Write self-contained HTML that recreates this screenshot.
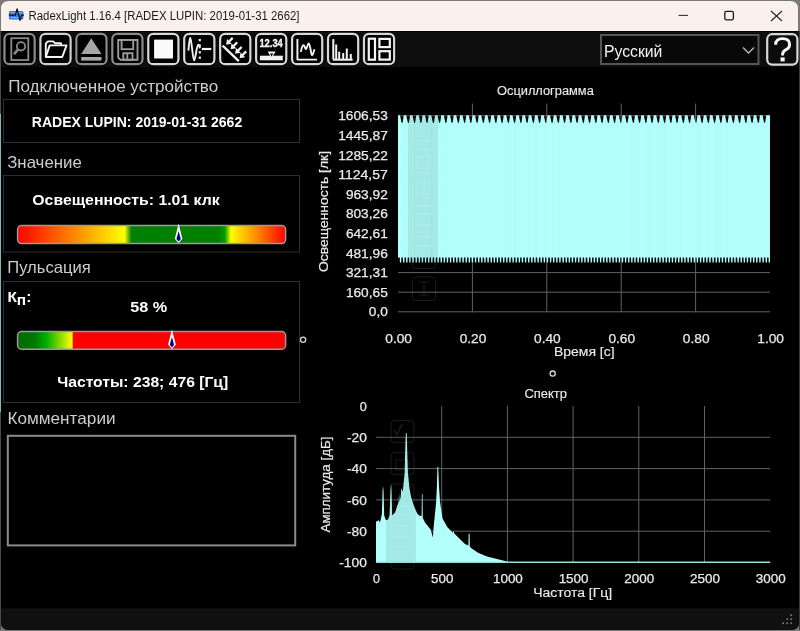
<!DOCTYPE html>
<html><head><meta charset="utf-8">
<style>
html,body{margin:0;padding:0;background:#7a7a7a;width:800px;height:631px;overflow:hidden}
svg{display:block;position:absolute;left:0;top:0;will-change:transform}
text{font-family:"Liberation Sans",sans-serif}
</style></head><body>
<svg width="800" height="631" viewBox="0 0 800 631">
<defs>
<linearGradient id="g1" x1="17" x2="286" y1="0" y2="0" gradientUnits="userSpaceOnUse">
<stop offset="0" stop-color="#ff0000"/>
<stop offset="0.40" stop-color="#ffff00"/>
<stop offset="0.425" stop-color="#008000"/>
<stop offset="0.75" stop-color="#008000"/>
<stop offset="0.773" stop-color="#00a000"/>
<stop offset="0.795" stop-color="#ffff00"/>
<stop offset="1" stop-color="#ff0000"/>
</linearGradient>
<linearGradient id="g2" x1="17" x2="286" y1="0" y2="0" gradientUnits="userSpaceOnUse">
<stop offset="0" stop-color="#006a00"/>
<stop offset="0.067" stop-color="#007a00"/>
<stop offset="0.11" stop-color="#00b000"/>
<stop offset="0.205" stop-color="#ffff00"/>
<stop offset="0.209" stop-color="#ff0000"/>
<stop offset="1" stop-color="#ff0000"/>
</linearGradient>
</defs>
<!-- window frame -->
<rect x="0" y="0" width="800" height="631" fill="#7a7a7a"/>
<path d="M1 31 V9 Q1 1 9 1 H790 Q798 1 798 9 V31 Z" fill="#faf1ed"/>
<path d="M1 31 H799 V622 Q799 630 791 630 H9 Q1 630 1 622 Z" fill="#000"/>
<rect x="1" y="31" width="798" height="36" fill="#0e0e0e"/>
<path d="M1 608.3 H799 V622 Q799 630 791 630 H9 Q1 630 1 622 Z" fill="#101010"/>
<!-- title -->
<text x="28.5" y="19.5" font-size="12" fill="#1a1a1a" textLength="271" lengthAdjust="spacingAndGlyphs">RadexLight 1.16.4 [RADEX LUPIN: 2019-01-31 2662]</text>
<!-- window buttons -->
<line x1="678.5" y1="15.4" x2="688" y2="15.4" stroke="#333" stroke-width="1.1"/>
<rect x="724.8" y="11.4" width="8.6" height="8.4" rx="1.6" fill="none" stroke="#1a1a1a" stroke-width="1.3"/>
<path d="M771 11 L782 21 M782 11 L771 21" stroke="#222" stroke-width="1.1"/>
<!-- toolbar -->
<rect x="1" y="31" width="798" height="1" fill="#000"/>
<g fill="#000" stroke-width="4.5">
<rect x="4.45" y="33.9" width="30.2" height="30.3" rx="6" stroke="#000"/>
<rect x="40.40" y="33.9" width="30.2" height="30.3" rx="6" stroke="#000"/>
<rect x="76.35" y="33.9" width="30.2" height="30.3" rx="6" stroke="#000"/>
<rect x="112.30" y="33.9" width="30.2" height="30.3" rx="6" stroke="#000"/>
<rect x="148.25" y="33.9" width="30.2" height="30.3" rx="6" stroke="#000"/>
<rect x="184.20" y="33.9" width="30.2" height="30.3" rx="6" stroke="#000"/>
<rect x="220.15" y="33.9" width="30.2" height="30.3" rx="6" stroke="#000"/>
<rect x="256.10" y="33.9" width="30.2" height="30.3" rx="6" stroke="#000"/>
<rect x="292.05" y="33.9" width="30.2" height="30.3" rx="6" stroke="#000"/>
<rect x="328.00" y="33.9" width="30.2" height="30.3" rx="6" stroke="#000"/>
<rect x="363.95" y="33.9" width="30.2" height="30.3" rx="6" stroke="#000"/>
</g>
<g fill="#000" stroke-width="2.2">
<rect x="4.45" y="33.9" width="30.2" height="30.3" rx="5" stroke="#8c8c8c"/>
<rect x="40.40" y="33.9" width="30.2" height="30.3" rx="5" stroke="#cfcfcf"/>
<rect x="76.35" y="33.9" width="30.2" height="30.3" rx="5" stroke="#8c8c8c"/>
<rect x="112.30" y="33.9" width="30.2" height="30.3" rx="5" stroke="#8c8c8c"/>
<rect x="148.25" y="33.9" width="30.2" height="30.3" rx="5" stroke="#d8d8d8"/>
<rect x="184.20" y="33.9" width="30.2" height="30.3" rx="5" stroke="#d8d8d8"/>
<rect x="220.15" y="33.9" width="30.2" height="30.3" rx="5" stroke="#d8d8d8"/>
<rect x="256.10" y="33.9" width="30.2" height="30.3" rx="5" stroke="#d8d8d8"/>
<rect x="292.05" y="33.9" width="30.2" height="30.3" rx="5" stroke="#d8d8d8"/>
<rect x="328.00" y="33.9" width="30.2" height="30.3" rx="5" stroke="#d8d8d8"/>
<rect x="363.95" y="33.9" width="30.2" height="30.3" rx="5" stroke="#d8d8d8"/>
</g>
<!-- icon1 search doc -->
<g fill="none" stroke="#8a8a8a" stroke-width="1.8">
<rect x="11.3" y="38.2" width="17" height="21.8"/>
<circle cx="21" cy="46.3" r="4.2"/>
<line x1="18.2" y1="49.3" x2="14" y2="54.2" stroke-width="2.6"/>
</g>
<!-- icon2 folder -->
<g fill="none" stroke="#f4f4f4" stroke-width="1.9" stroke-linejoin="round">
<path d="M45.8 57 V43.6 L48 41.4 H53.2 L55.1 43.3 H61 V45.4"/>
<path d="M49.7 45.4 H66.6 L62.2 57 H45.8 Z"/>
</g>
<!-- icon3 eject -->
<path d="M91.2 38.2 L101.5 54 H81.2 Z" fill="#a6a6a6"/>
<rect x="81.2" y="57" width="20.3" height="3.6" fill="#a6a6a6"/>
<!-- icon4 floppy -->
<g fill="none" stroke="#9a9a9a" stroke-width="1.9">
<path d="M118.2 40 H137.5 V59.8 H120.5 L118.2 57.5 Z"/>
<rect x="121.6" y="40" width="11.6" height="9.2"/>
<rect x="123.3" y="53.2" width="9.2" height="6.6"/>
<line x1="127.3" y1="53.2" x2="127.3" y2="59.8"/>
</g>
<!-- icon5 stop -->
<rect x="154.1" y="39.6" width="18.9" height="18.9" fill="#fafafa"/>
<!-- icon6 wave+dots -->
<g fill="none" stroke="#f2f2f2" stroke-width="1.9" stroke-linejoin="round">
<path d="M188.4 50.6 C189.2 44, 189.4 37.6, 190.3 37.6 C191.4 37.6, 192.8 60.4, 194.1 60.4 C195.4 60.4, 196.8 44.6, 198.1 44.6 C198.9 44.6, 199.4 47, 200.2 48.2"/>
<line x1="201.8" y1="49" x2="211.3" y2="49" stroke-width="2.2"/>
</g>
<g fill="#f2f2f2">
<rect x="198.7" y="39" width="2.2" height="2.2"/>
<rect x="198.7" y="44.4" width="2.2" height="2.2"/>
<rect x="198.7" y="51.2" width="2.2" height="2.2"/>
<rect x="198.7" y="56.6" width="2.2" height="2.2"/>
</g>
<!-- icon7 rays -->
<line x1="222.6" y1="45.6" x2="238.8" y2="61.2" stroke="#f2f2f2" stroke-width="2.3"/>
<line x1="232.7" y1="37.9" x2="228.6" y2="42.0" stroke="#f2f2f2" stroke-width="2.3"/><path d="M226.1 44.7 L231.7 43.8 L227.0 39.1 Z" fill="#f2f2f2"/><line x1="237.2" y1="42.4" x2="233.1" y2="46.5" stroke="#f2f2f2" stroke-width="2.3"/><path d="M230.6 49.2 L236.2 48.3 L231.5 43.6 Z" fill="#f2f2f2"/><line x1="241.7" y1="46.9" x2="237.6" y2="51.0" stroke="#f2f2f2" stroke-width="2.3"/><path d="M235.1 53.7 L240.7 52.8 L236.0 48.1 Z" fill="#f2f2f2"/><line x1="246.2" y1="51.4" x2="242.1" y2="55.5" stroke="#f2f2f2" stroke-width="2.3"/><path d="M239.6 58.2 L245.2 57.3 L240.5 52.6 Z" fill="#f2f2f2"/>
<!-- icon8 12.34 -->
<text x="259.4" y="46.6" font-size="10.2" font-weight="bold" fill="#f2f2f2" stroke="#f2f2f2" stroke-width="0.35" textLength="23.4" lengthAdjust="spacingAndGlyphs">12.34</text>
<rect x="259.9" y="55.7" width="22.9" height="4.6" fill="#f2f2f2"/>
<path d="M267.6 51.6 H275.6 L271.6 58.2 Z" fill="#f2f2f2"/><path d="M270 53.6 H273.2 L271.6 56.4 Z" fill="#000"/>
<!-- icon9 wave plot -->
<g fill="none" stroke="#f2f2f2" stroke-width="1.9" stroke-linejoin="round">
<path d="M297.4 39.1 V59.6 H317"/>
<path d="M300.8 51.9 C301.8 47, 302.6 45.2, 303.6 45.3 C304.8 45.5, 305 49.2, 306 49.2 C307 49.2, 307.6 43.3, 308.8 43.5 C310.2 43.7, 311 55.5, 312.1 55.4 C313.2 55.3, 313.6 51, 314.6 49.3"/>
</g>
<!-- icon10 histogram -->
<g fill="#f2f2f2">
<rect x="332.8" y="58.7" width="19.8" height="2"/>
<rect x="332.3" y="39.1" width="2" height="20"/>
<rect x="335.2" y="44.5" width="2" height="15"/>
<rect x="338.2" y="51.7" width="2" height="8"/>
<rect x="342.2" y="53" width="2" height="7"/>
<rect x="345.8" y="48.5" width="2" height="11"/>
<rect x="349.8" y="54" width="2" height="6"/>
</g>
<!-- icon11 layout -->
<g fill="none" stroke="#f4f4f4" stroke-width="2.2">
<rect x="368.8" y="38.7" width="6.2" height="21"/>
<rect x="379.4" y="38.9" width="10.4" height="8.2"/>
<rect x="379.4" y="51.2" width="10.4" height="8.4"/>
</g>
<!-- combobox -->
<rect x="601" y="35" width="157.5" height="29" fill="#080808" stroke="#555" stroke-width="2"/>
<text x="604" y="56.9" font-size="16" fill="#f4f4f4" textLength="58.4" lengthAdjust="spacingAndGlyphs">Русский</text>
<path d="M743 47.5 L748.5 53 L754 47.5" fill="none" stroke="#bbb" stroke-width="1.3"/>
<rect x="767.2" y="34.2" width="30.2" height="30.4" rx="5" fill="#0c0c0c" stroke="#d8d8d8" stroke-width="2.2"/>
<path d="M775.6 44.8 Q775.6 38.6 782.4 38.6 Q789.6 38.6 789.6 44.4 Q789.6 47.6 786.2 49.6 Q782.6 51.8 782.6 54.2 V55.4" fill="none" stroke="#fafafa" stroke-width="2.9"/><rect x="780.5" y="57.4" width="4.2" height="4" fill="#fafafa"/>
<!-- left panels -->
<g fill="none" stroke="#2e2e2e" stroke-width="1">
<rect x="3.5" y="99.5" width="296" height="43"/>
<rect x="3.5" y="175.5" width="296" height="76.5"/>
<rect x="3.5" y="281.5" width="296" height="121"/>
</g>
<g font-size="16.5" fill="#cccccc">
<text x="8.2" y="92" textLength="210" lengthAdjust="spacingAndGlyphs">Подключенное устройство</text>
<text x="7.2" y="168" textLength="74.6" lengthAdjust="spacingAndGlyphs">Значение</text>
<text x="7.2" y="273.4" textLength="83.6" lengthAdjust="spacingAndGlyphs">Пульсация</text>
<text x="7.4" y="423.5" textLength="108.2" lengthAdjust="spacingAndGlyphs">Комментарии</text>
</g>
<g font-weight="bold" fill="#ffffff">
<text x="31.8" y="126.6" font-size="13.8" textLength="210.4" lengthAdjust="spacingAndGlyphs">RADEX LUPIN: 2019-01-31 2662</text>
<text x="32.3" y="205" font-size="14.3" textLength="187.4" lengthAdjust="spacingAndGlyphs">Освещенность: 1.01 клк</text>
<text x="130.2" y="311.6" font-size="14.3" textLength="37" lengthAdjust="spacingAndGlyphs">58 %</text>
<text x="57.2" y="387" font-size="14.3" textLength="171" lengthAdjust="spacingAndGlyphs">Частоты: 238; 476 [Гц]</text>
<text x="7.4" y="301.6" font-size="14.8" textLength="24" lengthAdjust="spacingAndGlyphs">К<tspan dy="3">п</tspan><tspan dy="-3">:</tspan></text>
</g>
<!-- gauge 1 -->
<rect x="17.6" y="225.6" width="268" height="18" rx="4" fill="url(#g1)" stroke="#9a9a9a" stroke-width="1.5"/>
<path d="M178.6 223.6 L182.4 238.7 L178.6 243.2 L174.8 238.7 Z" fill="#fff"/><path d="M178.6 231 L180.8 238.9 L178.6 241.6 L176.4 238.9 Z" fill="#00008a"/>
<!-- gauge 2 -->
<rect x="17.6" y="331.6" width="268" height="17.6" rx="4" fill="url(#g2)" stroke="#9a9a9a" stroke-width="1.5"/>
<path d="M171.9 329.4 L175.8 344.6 L171.9 349 L168.1 344.6 Z" fill="#fff"/><path d="M171.9 337 L174.1 344.8 L171.9 347.4 L169.7 344.8 Z" fill="#00008a"/>
<circle cx="303.1" cy="339.8" r="2.6" fill="none" stroke="#d8d8d8" stroke-width="1.3"/>
<!-- comment box -->
<rect x="7.8" y="435.8" width="287.4" height="109.6" fill="none" stroke="#8a8a8a" stroke-width="2"/>
<!-- misc -->
<rect x="0" y="31" width="1" height="599" fill="#4a4a4a"/>
<rect x="0" y="114" width="1" height="298" fill="#86b4b4"/>
<rect x="799" y="31" width="1" height="599" fill="#3a3a3a"/>
<rect x="8.9" y="11" width="14.5" height="8.6" rx="1.5" fill="#2a7be2"/>
<line x1="10.5" y1="12.8" x2="22" y2="12.8" stroke="#bcd6f5" stroke-width="0.8"/>
<line x1="10.5" y1="17.6" x2="22" y2="17.6" stroke="#bcd6f5" stroke-width="0.8"/>
<path d="M8.9 15.2 L15.4 15 L17.1 8.8 L20 20.3 L21.7 15.4 L23.8 15" fill="none" stroke="#111" stroke-width="1.3" stroke-linejoin="round"/>
<g fill="#707070"><rect x="790.3" y="614.3" width="1.8" height="1.8"/><rect x="786.3" y="618.3" width="1.8" height="1.8"/><rect x="790.3" y="618.3" width="1.8" height="1.8"/><rect x="782.3" y="622.3" width="1.8" height="1.8"/><rect x="786.3" y="622.3" width="1.8" height="1.8"/><rect x="790.3" y="622.3" width="1.8" height="1.8"/></g>
<!-- charts -->
<g stroke="#626262" stroke-width="1"><line x1="472.4" y1="103.6" x2="472.4" y2="312.3"/><line x1="546.8" y1="103.6" x2="546.8" y2="312.3"/><line x1="621.2" y1="103.6" x2="621.2" y2="312.3"/><line x1="695.6" y1="103.6" x2="695.6" y2="312.3"/><line x1="398.0" y1="311.8" x2="770.0" y2="311.8"/><line x1="398.0" y1="292.2" x2="770.0" y2="292.2"/><line x1="398.0" y1="272.6" x2="770.0" y2="272.6"/><line x1="398.0" y1="253.0" x2="770.0" y2="253.0"/><line x1="398.0" y1="233.4" x2="770.0" y2="233.4"/><line x1="398.0" y1="213.8" x2="770.0" y2="213.8"/><line x1="398.0" y1="194.2" x2="770.0" y2="194.2"/><line x1="398.0" y1="174.6" x2="770.0" y2="174.6"/><line x1="398.0" y1="155.0" x2="770.0" y2="155.0"/><line x1="398.0" y1="135.4" x2="770.0" y2="135.4"/><line x1="398.0" y1="115.8" x2="770.0" y2="115.8"/></g>
<path d="M398.0 122.8 L398.0 115.2 L400.0 115.2 L401.6 122.8 L402.6 122.8 L403.8 115.2 L404.2 115.2 L406.2 115.2 L407.9 122.8 L408.9 122.8 L410.1 115.2 L410.5 115.2 L412.5 115.2 L414.1 122.8 L415.1 122.8 L416.3 115.2 L416.8 115.2 L418.8 115.2 L420.4 122.8 L421.4 122.8 L422.6 115.2 L423.0 115.2 L425.0 115.2 L426.6 122.8 L427.6 122.8 L428.8 115.2 L429.2 115.2 L431.2 115.2 L432.9 122.8 L433.9 122.8 L435.1 115.2 L435.5 115.2 L437.5 115.2 L439.1 122.8 L440.1 122.8 L441.3 115.2 L441.8 115.2 L443.8 115.2 L445.4 122.8 L446.4 122.8 L447.6 115.2 L448.0 115.2 L450.0 115.2 L451.6 122.8 L452.6 122.8 L453.8 115.2 L454.2 115.2 L456.2 115.2 L457.9 122.8 L458.9 122.8 L460.1 115.2 L460.5 115.2 L462.5 115.2 L464.1 122.8 L465.1 122.8 L466.3 115.2 L466.8 115.2 L468.8 115.2 L470.4 122.8 L471.4 122.8 L472.6 115.2 L473.0 115.2 L475.0 115.2 L476.6 122.8 L477.6 122.8 L478.8 115.2 L479.2 115.2 L481.2 115.2 L482.9 122.8 L483.9 122.8 L485.1 115.2 L485.5 115.2 L487.5 115.2 L489.1 122.8 L490.1 122.8 L491.3 115.2 L491.8 115.2 L493.8 115.2 L495.4 122.8 L496.4 122.8 L497.6 115.2 L498.0 115.2 L500.0 115.2 L501.6 122.8 L502.6 122.8 L503.8 115.2 L504.2 115.2 L506.2 115.2 L507.9 122.8 L508.9 122.8 L510.1 115.2 L510.5 115.2 L512.5 115.2 L514.1 122.8 L515.1 122.8 L516.3 115.2 L516.8 115.2 L518.8 115.2 L520.4 122.8 L521.4 122.8 L522.5 115.2 L523.0 115.2 L525.0 115.2 L526.6 122.8 L527.6 122.8 L528.8 115.2 L529.2 115.2 L531.2 115.2 L532.9 122.8 L533.9 122.8 L535.0 115.2 L535.5 115.2 L537.5 115.2 L539.1 122.8 L540.1 122.8 L541.3 115.2 L541.8 115.2 L543.8 115.2 L545.4 122.8 L546.4 122.8 L547.5 115.2 L548.0 115.2 L550.0 115.2 L551.6 122.8 L552.6 122.8 L553.8 115.2 L554.2 115.2 L556.2 115.2 L557.9 122.8 L558.9 122.8 L560.0 115.2 L560.5 115.2 L562.5 115.2 L564.1 122.8 L565.1 122.8 L566.3 115.2 L566.8 115.2 L568.8 115.2 L570.4 122.8 L571.4 122.8 L572.5 115.2 L573.0 115.2 L575.0 115.2 L576.6 122.8 L577.6 122.8 L578.8 115.2 L579.2 115.2 L581.2 115.2 L582.9 122.8 L583.9 122.8 L585.0 115.2 L585.5 115.2 L587.5 115.2 L589.1 122.8 L590.1 122.8 L591.3 115.2 L591.8 115.2 L593.8 115.2 L595.4 122.8 L596.4 122.8 L597.5 115.2 L598.0 115.2 L600.0 115.2 L601.6 122.8 L602.6 122.8 L603.8 115.2 L604.2 115.2 L606.2 115.2 L607.9 122.8 L608.9 122.8 L610.0 115.2 L610.5 115.2 L612.5 115.2 L614.1 122.8 L615.1 122.8 L616.3 115.2 L616.8 115.2 L618.8 115.2 L620.4 122.8 L621.4 122.8 L622.5 115.2 L623.0 115.2 L625.0 115.2 L626.6 122.8 L627.6 122.8 L628.8 115.2 L629.2 115.2 L631.2 115.2 L632.9 122.8 L633.9 122.8 L635.0 115.2 L635.5 115.2 L637.5 115.2 L639.1 122.8 L640.1 122.8 L641.3 115.2 L641.8 115.2 L643.8 115.2 L645.4 122.8 L646.4 122.8 L647.5 115.2 L648.0 115.2 L650.0 115.2 L651.6 122.8 L652.6 122.8 L653.8 115.2 L654.2 115.2 L656.2 115.2 L657.9 122.8 L658.9 122.8 L660.0 115.2 L660.5 115.2 L662.5 115.2 L664.1 122.8 L665.1 122.8 L666.3 115.2 L666.8 115.2 L668.8 115.2 L670.4 122.8 L671.4 122.8 L672.5 115.2 L673.0 115.2 L675.0 115.2 L676.6 122.8 L677.6 122.8 L678.8 115.2 L679.2 115.2 L681.2 115.2 L682.9 122.8 L683.9 122.8 L685.0 115.2 L685.5 115.2 L687.5 115.2 L689.1 122.8 L690.1 122.8 L691.3 115.2 L691.8 115.2 L693.8 115.2 L695.4 122.8 L696.4 122.8 L697.5 115.2 L698.0 115.2 L700.0 115.2 L701.6 122.8 L702.6 122.8 L703.8 115.2 L704.2 115.2 L706.2 115.2 L707.9 122.8 L708.9 122.8 L710.0 115.2 L710.5 115.2 L712.5 115.2 L714.1 122.8 L715.1 122.8 L716.3 115.2 L716.8 115.2 L718.8 115.2 L720.4 122.8 L721.4 122.8 L722.5 115.2 L723.0 115.2 L725.0 115.2 L726.6 122.8 L727.6 122.8 L728.8 115.2 L729.2 115.2 L731.2 115.2 L732.9 122.8 L733.9 122.8 L735.0 115.2 L735.5 115.2 L737.5 115.2 L739.1 122.8 L740.1 122.8 L741.3 115.2 L741.8 115.2 L743.8 115.2 L745.4 122.8 L746.4 122.8 L747.5 115.2 L748.0 115.2 L750.0 115.2 L751.6 122.8 L752.6 122.8 L753.8 115.2 L754.2 115.2 L756.2 115.2 L757.9 122.8 L758.9 122.8 L760.0 115.2 L760.5 115.2 L762.5 115.2 L764.1 122.8 L765.1 122.8 L766.3 115.2 L770.0 115.2 L770.0 262.5 L770.0 262.5 L768.7 262.5 L768.5 257.6 L767.1 257.6 L766.9 262.5 L765.6 262.5 L765.4 257.6 L764.0 257.6 L763.8 262.5 L762.5 262.5 L762.2 257.6 L760.8 257.6 L760.6 262.5 L759.3 262.5 L759.1 257.6 L757.7 257.6 L757.5 262.5 L756.2 262.5 L756.0 257.6 L754.6 257.6 L754.4 262.5 L753.1 262.5 L752.9 257.6 L751.5 257.6 L751.2 262.5 L750.0 262.5 L749.8 257.6 L748.3 257.6 L748.1 262.5 L746.8 262.5 L746.6 257.6 L745.2 257.6 L745.0 262.5 L743.7 262.5 L743.5 257.6 L742.1 257.6 L741.9 262.5 L740.6 262.5 L740.4 257.6 L739.0 257.6 L738.8 262.5 L737.5 262.5 L737.2 257.6 L735.8 257.6 L735.6 262.5 L734.3 262.5 L734.1 257.6 L732.7 257.6 L732.5 262.5 L731.2 262.5 L731.0 257.6 L729.6 257.6 L729.4 262.5 L728.1 262.5 L727.9 257.6 L726.5 257.6 L726.2 262.5 L725.0 262.5 L724.8 257.6 L723.3 257.6 L723.1 262.5 L721.8 262.5 L721.6 257.6 L720.2 257.6 L720.0 262.5 L718.7 262.5 L718.5 257.6 L717.1 257.6 L716.9 262.5 L715.6 262.5 L715.4 257.6 L714.0 257.6 L713.8 262.5 L712.5 262.5 L712.2 257.6 L710.8 257.6 L710.6 262.5 L709.3 262.5 L709.1 257.6 L707.7 257.6 L707.5 262.5 L706.2 262.5 L706.0 257.6 L704.6 257.6 L704.4 262.5 L703.1 262.5 L702.9 257.6 L701.5 257.6 L701.2 262.5 L700.0 262.5 L699.8 257.6 L698.3 257.6 L698.1 262.5 L696.8 262.5 L696.6 257.6 L695.2 257.6 L695.0 262.5 L693.7 262.5 L693.5 257.6 L692.1 257.6 L691.9 262.5 L690.6 262.5 L690.4 257.6 L689.0 257.6 L688.8 262.5 L687.5 262.5 L687.2 257.6 L685.8 257.6 L685.6 262.5 L684.3 262.5 L684.1 257.6 L682.7 257.6 L682.5 262.5 L681.2 262.5 L681.0 257.6 L679.6 257.6 L679.4 262.5 L678.1 262.5 L677.9 257.6 L676.5 257.6 L676.2 262.5 L675.0 262.5 L674.8 257.6 L673.3 257.6 L673.1 262.5 L671.8 262.5 L671.6 257.6 L670.2 257.6 L670.0 262.5 L668.7 262.5 L668.5 257.6 L667.1 257.6 L666.9 262.5 L665.6 262.5 L665.4 257.6 L664.0 257.6 L663.8 262.5 L662.5 262.5 L662.2 257.6 L660.8 257.6 L660.6 262.5 L659.3 262.5 L659.1 257.6 L657.7 257.6 L657.5 262.5 L656.2 262.5 L656.0 257.6 L654.6 257.6 L654.4 262.5 L653.1 262.5 L652.9 257.6 L651.5 257.6 L651.2 262.5 L650.0 262.5 L649.8 257.6 L648.3 257.6 L648.1 262.5 L646.8 262.5 L646.6 257.6 L645.2 257.6 L645.0 262.5 L643.7 262.5 L643.5 257.6 L642.1 257.6 L641.9 262.5 L640.6 262.5 L640.4 257.6 L639.0 257.6 L638.8 262.5 L637.5 262.5 L637.2 257.6 L635.8 257.6 L635.6 262.5 L634.3 262.5 L634.1 257.6 L632.7 257.6 L632.5 262.5 L631.2 262.5 L631.0 257.6 L629.6 257.6 L629.4 262.5 L628.1 262.5 L627.9 257.6 L626.5 257.6 L626.2 262.5 L625.0 262.5 L624.8 257.6 L623.3 257.6 L623.1 262.5 L621.8 262.5 L621.6 257.6 L620.2 257.6 L620.0 262.5 L618.7 262.5 L618.5 257.6 L617.1 257.6 L616.9 262.5 L615.6 262.5 L615.4 257.6 L614.0 257.6 L613.8 262.5 L612.5 262.5 L612.2 257.6 L610.8 257.6 L610.6 262.5 L609.3 262.5 L609.1 257.6 L607.7 257.6 L607.5 262.5 L606.2 262.5 L606.0 257.6 L604.6 257.6 L604.4 262.5 L603.1 262.5 L602.9 257.6 L601.5 257.6 L601.2 262.5 L600.0 262.5 L599.8 257.6 L598.3 257.6 L598.1 262.5 L596.8 262.5 L596.6 257.6 L595.2 257.6 L595.0 262.5 L593.7 262.5 L593.5 257.6 L592.1 257.6 L591.9 262.5 L590.6 262.5 L590.4 257.6 L589.0 257.6 L588.8 262.5 L587.5 262.5 L587.2 257.6 L585.8 257.6 L585.6 262.5 L584.3 262.5 L584.1 257.6 L582.7 257.6 L582.5 262.5 L581.2 262.5 L581.0 257.6 L579.6 257.6 L579.4 262.5 L578.1 262.5 L577.9 257.6 L576.5 257.6 L576.2 262.5 L575.0 262.5 L574.8 257.6 L573.3 257.6 L573.1 262.5 L571.8 262.5 L571.6 257.6 L570.2 257.6 L570.0 262.5 L568.7 262.5 L568.5 257.6 L567.1 257.6 L566.9 262.5 L565.6 262.5 L565.4 257.6 L564.0 257.6 L563.8 262.5 L562.5 262.5 L562.2 257.6 L560.8 257.6 L560.6 262.5 L559.3 262.5 L559.1 257.6 L557.7 257.6 L557.5 262.5 L556.2 262.5 L556.0 257.6 L554.6 257.6 L554.4 262.5 L553.1 262.5 L552.9 257.6 L551.5 257.6 L551.2 262.5 L550.0 262.5 L549.8 257.6 L548.3 257.6 L548.1 262.5 L546.8 262.5 L546.6 257.6 L545.2 257.6 L545.0 262.5 L543.7 262.5 L543.5 257.6 L542.1 257.6 L541.9 262.5 L540.6 262.5 L540.4 257.6 L539.0 257.6 L538.8 262.5 L537.5 262.5 L537.2 257.6 L535.8 257.6 L535.6 262.5 L534.3 262.5 L534.1 257.6 L532.7 257.6 L532.5 262.5 L531.2 262.5 L531.0 257.6 L529.6 257.6 L529.4 262.5 L528.1 262.5 L527.9 257.6 L526.5 257.6 L526.2 262.5 L525.0 262.5 L524.8 257.6 L523.3 257.6 L523.1 262.5 L521.8 262.5 L521.6 257.6 L520.2 257.6 L520.0 262.5 L518.7 262.5 L518.5 257.6 L517.1 257.6 L516.9 262.5 L515.6 262.5 L515.4 257.6 L514.0 257.6 L513.8 262.5 L512.5 262.5 L512.2 257.6 L510.8 257.6 L510.6 262.5 L509.3 262.5 L509.1 257.6 L507.7 257.6 L507.5 262.5 L506.2 262.5 L506.0 257.6 L504.6 257.6 L504.4 262.5 L503.1 262.5 L502.9 257.6 L501.4 257.6 L501.2 262.5 L499.9 262.5 L499.8 257.6 L498.3 257.6 L498.1 262.5 L496.8 262.5 L496.6 257.6 L495.2 257.6 L495.0 262.5 L493.7 262.5 L493.5 257.6 L492.1 257.6 L491.9 262.5 L490.6 262.5 L490.4 257.6 L488.9 257.6 L488.8 262.5 L487.4 262.5 L487.2 257.6 L485.8 257.6 L485.6 262.5 L484.3 262.5 L484.1 257.6 L482.7 257.6 L482.5 262.5 L481.2 262.5 L481.0 257.6 L479.6 257.6 L479.4 262.5 L478.1 262.5 L477.9 257.6 L476.4 257.6 L476.2 262.5 L474.9 262.5 L474.8 257.6 L473.3 257.6 L473.1 262.5 L471.8 262.5 L471.6 257.6 L470.2 257.6 L470.0 262.5 L468.7 262.5 L468.5 257.6 L467.1 257.6 L466.9 262.5 L465.6 262.5 L465.4 257.6 L463.9 257.6 L463.8 262.5 L462.4 262.5 L462.2 257.6 L460.8 257.6 L460.6 262.5 L459.3 262.5 L459.1 257.6 L457.7 257.6 L457.5 262.5 L456.2 262.5 L456.0 257.6 L454.6 257.6 L454.4 262.5 L453.1 262.5 L452.9 257.6 L451.4 257.6 L451.2 262.5 L449.9 262.5 L449.8 257.6 L448.3 257.6 L448.1 262.5 L446.8 262.5 L446.6 257.6 L445.2 257.6 L445.0 262.5 L443.7 262.5 L443.5 257.6 L442.1 257.6 L441.9 262.5 L440.6 262.5 L440.4 257.6 L438.9 257.6 L438.8 262.5 L437.4 262.5 L437.2 257.6 L435.8 257.6 L435.6 262.5 L434.3 262.5 L434.1 257.6 L432.7 257.6 L432.5 262.5 L431.2 262.5 L431.0 257.6 L429.6 257.6 L429.4 262.5 L428.1 262.5 L427.9 257.6 L426.4 257.6 L426.2 262.5 L424.9 262.5 L424.8 257.6 L423.3 257.6 L423.1 262.5 L421.8 262.5 L421.6 257.6 L420.2 257.6 L420.0 262.5 L418.7 262.5 L418.5 257.6 L417.1 257.6 L416.9 262.5 L415.6 262.5 L415.4 257.6 L413.9 257.6 L413.8 262.5 L412.4 262.5 L412.2 257.6 L410.8 257.6 L410.6 262.5 L409.3 262.5 L409.1 257.6 L407.7 257.6 L407.5 262.5 L406.2 262.5 L406.0 257.6 L404.6 257.6 L404.4 262.5 L403.1 262.5 L402.9 257.6 L401.4 257.6 L401.2 262.5 L399.9 262.5 L399.8 257.6 L398.3 257.6 L398.0 257.6 Z" fill="#b3fffc"/>
<g fill="#9ae6e6" opacity="0.12"><rect x="486.5" y="123" width="0.9" height="135"/><rect x="535.6" y="123" width="1.0" height="135"/><rect x="630.8" y="123" width="0.6" height="135"/><rect x="402.9" y="123" width="1.2" height="135"/><rect x="494.5" y="123" width="0.7" height="135"/><rect x="768.4" y="123" width="0.9" height="135"/><rect x="709.2" y="123" width="0.9" height="135"/><rect x="635.7" y="123" width="0.6" height="135"/><rect x="634.2" y="123" width="1.2" height="135"/><rect x="592.6" y="123" width="1.1" height="135"/><rect x="647.8" y="123" width="0.6" height="135"/><rect x="680.1" y="123" width="1.0" height="135"/><rect x="510.1" y="123" width="0.5" height="135"/><rect x="720.0" y="123" width="0.9" height="135"/><rect x="665.4" y="123" width="1.2" height="135"/><rect x="663.7" y="123" width="1.2" height="135"/><rect x="544.9" y="123" width="1.1" height="135"/><rect x="563.4" y="123" width="1.2" height="135"/><rect x="724.9" y="123" width="0.6" height="135"/><rect x="448.6" y="123" width="0.7" height="135"/><rect x="757.2" y="123" width="0.8" height="135"/><rect x="631.1" y="123" width="0.7" height="135"/><rect x="586.7" y="123" width="0.8" height="135"/><rect x="528.5" y="123" width="1.0" height="135"/><rect x="615.3" y="123" width="1.2" height="135"/><rect x="651.7" y="123" width="1.2" height="135"/><rect x="716.6" y="123" width="1.3" height="135"/><rect x="647.7" y="123" width="0.6" height="135"/><rect x="718.2" y="123" width="1.3" height="135"/><rect x="734.5" y="123" width="1.0" height="135"/><rect x="663.5" y="123" width="0.7" height="135"/><rect x="707.4" y="123" width="1.0" height="135"/><rect x="504.0" y="123" width="0.6" height="135"/><rect x="715.7" y="123" width="1.3" height="135"/><rect x="430.9" y="123" width="1.1" height="135"/><rect x="550.7" y="123" width="0.6" height="135"/><rect x="507.3" y="123" width="1.1" height="135"/><rect x="722.7" y="123" width="0.5" height="135"/><rect x="626.6" y="123" width="0.5" height="135"/><rect x="665.3" y="123" width="0.8" height="135"/><rect x="725.7" y="123" width="1.3" height="135"/><rect x="586.0" y="123" width="1.3" height="135"/><rect x="513.2" y="123" width="0.6" height="135"/><rect x="621.1" y="123" width="0.5" height="135"/><rect x="471.4" y="123" width="0.8" height="135"/><rect x="625.1" y="123" width="0.6" height="135"/><rect x="413.8" y="123" width="1.2" height="135"/><rect x="514.7" y="123" width="1.3" height="135"/><rect x="731.6" y="123" width="0.8" height="135"/><rect x="569.3" y="123" width="0.9" height="135"/><rect x="637.5" y="123" width="1.0" height="135"/><rect x="606.0" y="123" width="1.0" height="135"/><rect x="747.9" y="123" width="0.9" height="135"/><rect x="558.4" y="123" width="1.1" height="135"/><rect x="486.4" y="123" width="0.7" height="135"/><rect x="761.7" y="123" width="0.9" height="135"/><rect x="602.0" y="123" width="0.5" height="135"/><rect x="552.5" y="123" width="1.0" height="135"/><rect x="405.5" y="123" width="1.0" height="135"/><rect x="633.2" y="123" width="0.5" height="135"/><rect x="631.4" y="123" width="0.9" height="135"/><rect x="650.7" y="123" width="0.8" height="135"/><rect x="661.0" y="123" width="1.1" height="135"/><rect x="406.3" y="123" width="0.5" height="135"/><rect x="649.5" y="123" width="1.3" height="135"/><rect x="491.4" y="123" width="0.9" height="135"/><rect x="618.5" y="123" width="0.8" height="135"/><rect x="533.4" y="123" width="0.8" height="135"/><rect x="535.3" y="123" width="1.0" height="135"/><rect x="509.8" y="123" width="0.8" height="135"/><rect x="685.3" y="123" width="0.5" height="135"/><rect x="609.8" y="123" width="1.1" height="135"/><rect x="513.3" y="123" width="0.7" height="135"/><rect x="697.0" y="123" width="0.7" height="135"/><rect x="467.7" y="123" width="0.8" height="135"/><rect x="657.7" y="123" width="0.6" height="135"/><rect x="517.8" y="123" width="0.8" height="135"/><rect x="708.1" y="123" width="0.9" height="135"/><rect x="716.3" y="123" width="0.6" height="135"/><rect x="523.3" y="123" width="1.0" height="135"/><rect x="727.2" y="123" width="0.9" height="135"/><rect x="481.7" y="123" width="0.6" height="135"/><rect x="595.0" y="123" width="0.7" height="135"/><rect x="698.1" y="123" width="1.2" height="135"/><rect x="466.3" y="123" width="0.7" height="135"/><rect x="698.3" y="123" width="1.0" height="135"/><rect x="697.9" y="123" width="0.8" height="135"/><rect x="446.2" y="123" width="0.7" height="135"/><rect x="693.3" y="123" width="0.7" height="135"/><rect x="526.8" y="123" width="0.8" height="135"/></g>
<rect x="408" y="115" width="30" height="149" fill="#000" opacity="0.085"/>
<g font-size="12.1" fill="#e8e8e8" stroke="#e8e8e8" stroke-width="0.25"><text x="387.8" y="316.3" text-anchor="end" textLength="19.0" lengthAdjust="spacingAndGlyphs">0,0</text><text x="387.8" y="296.7" text-anchor="end" textLength="41.9" lengthAdjust="spacingAndGlyphs">160,65</text><text x="387.8" y="277.1" text-anchor="end" textLength="41.9" lengthAdjust="spacingAndGlyphs">321,31</text><text x="387.8" y="257.5" text-anchor="end" textLength="41.9" lengthAdjust="spacingAndGlyphs">481,96</text><text x="387.8" y="237.9" text-anchor="end" textLength="41.9" lengthAdjust="spacingAndGlyphs">642,61</text><text x="387.8" y="218.3" text-anchor="end" textLength="41.9" lengthAdjust="spacingAndGlyphs">803,26</text><text x="387.8" y="198.7" text-anchor="end" textLength="41.9" lengthAdjust="spacingAndGlyphs">963,92</text><text x="387.8" y="179.1" text-anchor="end" textLength="49.6" lengthAdjust="spacingAndGlyphs">1124,57</text><text x="387.8" y="159.5" text-anchor="end" textLength="49.6" lengthAdjust="spacingAndGlyphs">1285,22</text><text x="387.8" y="139.9" text-anchor="end" textLength="49.6" lengthAdjust="spacingAndGlyphs">1445,87</text><text x="387.8" y="120.3" text-anchor="end" textLength="49.6" lengthAdjust="spacingAndGlyphs">1606,53</text><text x="398.6" y="343.0" text-anchor="middle" textLength="26.7" lengthAdjust="spacingAndGlyphs">0.00</text><text x="473.0" y="343.0" text-anchor="middle" textLength="26.7" lengthAdjust="spacingAndGlyphs">0.20</text><text x="547.4" y="343.0" text-anchor="middle" textLength="26.7" lengthAdjust="spacingAndGlyphs">0.40</text><text x="621.8" y="343.0" text-anchor="middle" textLength="26.7" lengthAdjust="spacingAndGlyphs">0.60</text><text x="696.2" y="343.0" text-anchor="middle" textLength="26.7" lengthAdjust="spacingAndGlyphs">0.80</text><text x="770.6" y="343.0" text-anchor="middle" textLength="26.7" lengthAdjust="spacingAndGlyphs">1.00</text></g>
<text x="497" y="95.2" font-size="12" fill="#e8e8e8" stroke="#e8e8e8" stroke-width="0.15" lengthAdjust="spacingAndGlyphs" textLength="96.8">Осциллограмма</text>
<text x="554" y="355.6" font-size="12" fill="#e8e8e8" stroke="#e8e8e8" stroke-width="0.15" lengthAdjust="spacingAndGlyphs" textLength="60.6">Время [с]</text>
<text transform="translate(327.8 272) rotate(-90)" x="0" y="0" font-size="12.8" fill="#e8e8e8" stroke="#e8e8e8" stroke-width="0.2" textLength="121" lengthAdjust="spacingAndGlyphs">Освещенность [лк]</text>
<circle cx="552.7" cy="373.6" r="2.6" fill="none" stroke="#d8d8d8" stroke-width="1.3"/>
<g stroke="#626262" stroke-width="1"><line x1="441.7" y1="406.0" x2="441.7" y2="562.5"/><line x1="507.4" y1="406.0" x2="507.4" y2="562.5"/><line x1="573.1" y1="406.0" x2="573.1" y2="562.5"/><line x1="638.8" y1="406.0" x2="638.8" y2="562.5"/><line x1="704.5" y1="406.0" x2="704.5" y2="562.5"/><line x1="376.0" y1="437.3" x2="770.2" y2="437.3"/><line x1="376.0" y1="468.6" x2="770.2" y2="468.6"/><line x1="376.0" y1="499.9" x2="770.2" y2="499.9"/><line x1="376.0" y1="531.2" x2="770.2" y2="531.2"/></g>
<path d="M376.0 562.5 L376.0 521.7 L378.7 520.2 L380.0 522.5 L381.9 514.0 L382.6 490.0 L383.0 486.0 L383.5 490.0 L384.2 515.6 L386.0 520.2 L388.0 519.5 L389.5 515.6 L390.5 490.0 L391.0 483.0 L391.5 490.0 L392.2 515.6 L394.0 513.4 L395.2 512.3 L396.5 508.0 L398.6 502.0 L399.1 493.0 L399.6 502.0 L400.7 496.4 L401.2 489.0 L401.8 488.5 L402.3 492.0 L403.1 488.5 L404.7 472.6 L405.0 456.7 L405.5 440.9 L405.9 433.0 L406.7 433.0 L407.0 440.9 L407.4 456.7 L407.9 472.6 L409.5 488.5 L411.0 496.4 L413.4 504.4 L416.6 512.3 L418.0 514.5 L420.0 516.0 L421.6 516.0 L421.9 494.0 L422.5 494.0 L422.8 518.0 L425.0 522.5 L428.2 526.4 L430.6 529.6 L432.9 537.5 L433.7 526.4 L434.5 518.5 L436.1 502.6 L436.9 486.7 L437.4 466.9 L438.2 466.9 L439.0 486.7 L440.1 502.6 L442.5 518.5 L445.0 523.0 L447.2 527.0 L452.8 532.8 L453.6 531.0 L454.3 533.5 L458.3 537.5 L465.0 543.9 L468.4 545.5 L468.6 533.7 L469.6 533.7 L469.8 546.5 L471.0 548.0 L478.0 552.7 L487.0 556.5 L497.0 559.0 L506.0 561.3 L508.0 562.3 L508.0 562.5 Z" fill="#b3fffc"/>
<rect x="386" y="405" width="30" height="158" fill="#000" opacity="0.085"/>
<line x1="376.0" y1="562.3" x2="770.2" y2="562.3" stroke="#9adcdc" stroke-width="1.6"/>
<g font-size="12.1" fill="#e8e8e8" stroke="#e8e8e8" stroke-width="0.25"><text x="366.8" y="410.6" text-anchor="end" textLength="7.0" lengthAdjust="spacingAndGlyphs">0</text><text x="366.8" y="441.9" text-anchor="end" textLength="19.8" lengthAdjust="spacingAndGlyphs">-20</text><text x="366.8" y="473.2" text-anchor="end" textLength="19.8" lengthAdjust="spacingAndGlyphs">-40</text><text x="366.8" y="504.5" text-anchor="end" textLength="19.8" lengthAdjust="spacingAndGlyphs">-60</text><text x="366.8" y="535.8" text-anchor="end" textLength="19.8" lengthAdjust="spacingAndGlyphs">-80</text><text x="366.8" y="567.1" text-anchor="end" textLength="27.5" lengthAdjust="spacingAndGlyphs">-100</text><text x="376.5" y="583.4" text-anchor="middle" textLength="7.0" lengthAdjust="spacingAndGlyphs">0</text><text x="442.2" y="583.4" text-anchor="middle" textLength="22.3" lengthAdjust="spacingAndGlyphs">500</text><text x="507.9" y="583.4" text-anchor="middle" textLength="29.9" lengthAdjust="spacingAndGlyphs">1000</text><text x="573.6" y="583.4" text-anchor="middle" textLength="29.9" lengthAdjust="spacingAndGlyphs">1500</text><text x="639.3" y="583.4" text-anchor="middle" textLength="29.9" lengthAdjust="spacingAndGlyphs">2000</text><text x="705.0" y="583.4" text-anchor="middle" textLength="29.9" lengthAdjust="spacingAndGlyphs">2500</text><text x="770.7" y="583.4" text-anchor="middle" textLength="29.9" lengthAdjust="spacingAndGlyphs">3000</text></g>
<text x="524.4" y="397.5" font-size="12" fill="#e8e8e8" stroke="#e8e8e8" stroke-width="0.15" lengthAdjust="spacingAndGlyphs" textLength="42.5">Спектр</text>
<text x="533.2" y="596.5" font-size="12" fill="#e8e8e8" stroke="#e8e8e8" stroke-width="0.15" lengthAdjust="spacingAndGlyphs" textLength="79">Частота [Гц]</text>
<text transform="translate(329.6 532.5) rotate(-90)" x="0" y="0" font-size="12.8" fill="#e8e8e8" stroke="#e8e8e8" stroke-width="0.2" textLength="96" lengthAdjust="spacingAndGlyphs">Амплитуда [дБ]</text>

<!-- /charts -->
<!-- overlays -->
<g fill="none" stroke="#ffffff" stroke-opacity="0.1" stroke-width="1">
<rect x="412.5" y="118" width="23" height="22.5" rx="3.5"/>
<rect x="412.5" y="149.7" width="23" height="23" rx="3.5"/>
<rect x="412.5" y="182.5" width="23" height="23" rx="3.5"/>
<rect x="412.5" y="213.5" width="23" height="23" rx="3.5"/>
<rect x="412.5" y="245.5" width="23" height="23" rx="3.5"/>
<rect x="412.5" y="277" width="23" height="23.5" rx="3.5"/>
<path d="M417 156 V168 H431 V157 L427 155 L423 157 Z"/>
<path d="M424 187 V201 M417 194 H431" stroke-width="1.6"/>
<path d="M417 225 H431" stroke-width="1.6"/>
<path d="M419 282 H429 M424 282 V295 M419 295 H429" stroke-width="1.2"/>
<rect x="391" y="420.5" width="23" height="22" rx="3.5"/>
<rect x="391" y="452.5" width="23" height="22" rx="3.5"/>
<rect x="391" y="484" width="23" height="22" rx="3.5"/>
<rect x="391" y="515" width="23" height="22" rx="3.5"/>
<rect x="391" y="547" width="23" height="22" rx="3.5"/>
<path d="M394 430 L397 435 L402 424" stroke-width="1.6"/>
<path d="M396 470 V459 L400 461 L404 459 L409 462 V470 Z"/>
<path d="M395 525.5 H410" stroke-width="1.6"/>
</g>
</svg>
</body></html>
